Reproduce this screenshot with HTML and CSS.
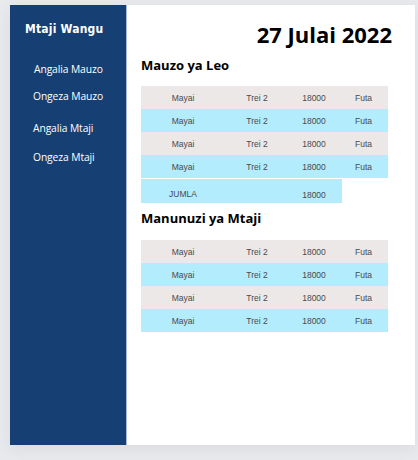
FILE: index.html
```html
<!DOCTYPE html>
<html>
<head>
<meta charset="utf-8">
<link rel="stylesheet" href="styles.css">
</head>
<body>
<div class="app">
  <aside class="sidebar">
    <div class="brand">Mtaji Wangu</div>
    <nav class="nav">
      <a class="nav-link l1">Angalia Mauzo</a>
      <a class="nav-link l2">Ongeza Mauzo</a>
      <a class="nav-link l3">Angalia Mtaji</a>
      <a class="nav-link l4">Ongeza Mtaji</a>
    </nav>
  </aside>
  <main class="main">
    <div class="date">27 Julai 2022</div>
    <h2 class="heading">Mauzo ya Leo</h2>
    <div class="table">
      <div class="row grey"><span>Mayai</span><span>Trei 2</span><span>18000</span><span>Futa</span></div>
      <div class="row cyan"><span>Mayai</span><span>Trei 2</span><span>18000</span><span>Futa</span></div>
      <div class="row grey"><span>Mayai</span><span>Trei 2</span><span>18000</span><span>Futa</span></div>
      <div class="row cyan"><span>Mayai</span><span>Trei 2</span><span>18000</span><span>Futa</span></div>
      <div class="row cyan total"><span class="jumla">JUMLA</span><span></span><span class="sum">18000</span></div>
    </div>
    <h2 class="heading h2b">Manunuzi ya Mtaji</h2>
    <div class="table t2">
      <div class="row grey"><span>Mayai</span><span>Trei 2</span><span>18000</span><span>Futa</span></div>
      <div class="row cyan"><span>Mayai</span><span>Trei 2</span><span>18000</span><span>Futa</span></div>
      <div class="row grey"><span>Mayai</span><span>Trei 2</span><span>18000</span><span>Futa</span></div>
      <div class="row cyan"><span>Mayai</span><span>Trei 2</span><span>18000</span><span>Futa</span></div>
    </div>
  </main>
</div>
</body>
</html>
```

FILE: styles.css
```css
html, body {
  margin: 0;
  padding: 0;
}
body {
  background: #e8e9ec;
  width: 418px;
  height: 460px;
  overflow: hidden;
}
.app {
  margin: 5px 0 0 10px;
  width: 405px;
  height: 440px;
  display: flex;
  box-shadow: 0 4px 14px rgba(0, 0, 0, 0.06);
}
.sidebar {
  width: 116px;
  background: #163f73;
  border-right: 1px solid #a9bcd6;
  color: #fff;
  font-family: "Open Sans", sans-serif;
}
.brand {
  font-family: "DejaVu Sans Condensed", "DejaVu Sans", sans-serif;
  font-weight: bold;
  font-size: 12px;
  margin: 16px 0 0 15px;
  line-height: 16px;
  letter-spacing: 0.2px;
}
.nav {
  display: flex;
  flex-direction: column;
  padding-left: 23px;
  margin-top: 25px;
}
.nav-link {
  font-size: 10.3px;
  line-height: 14px;
  color: #fff;
  letter-spacing: -0.1px;
}
.l1 { padding-left: 1px; }
.l2 { margin-top: 13px; }
.l3 { margin-top: 18px; }
.l4 { margin-top: 15px; }
.main {
  flex: 1;
  background: #fff;
  padding: 0 0 0 14px;
  font-family: "Open Sans", sans-serif;
}
.date {
  text-align: right;
  font-weight: bold;
  font-size: 22px;
  line-height: 26px;
  margin: 16px 23px 0 0;
}
.heading {
  margin: 9px 0 0 0;
  font-size: 13px;
  line-height: 18px;
  font-weight: bold;
  color: #000;
}
.h2b {
  margin-top: 6px;
}
.table {
  margin-top: 12px;
  width: 247px;
  font-family: "Liberation Sans", Arial, sans-serif;
  font-size: 8.5px;
  color: #4a4a4a;
}
.t2 {
  margin-top: 13px;
}
.row {
  display: grid;
  grid-template-columns: 84px 64px 50px 49px;
  height: 23px;
  align-items: center;
  text-align: center;
}
.grey { background: #ece8e7; }
.cyan { background: #b3ecfc; }
.total {
  width: 201px;
  margin-top: 1px;
  grid-template-columns: 84px 64px 50px;
  align-items: end;
  padding-bottom: 3px;
  box-sizing: border-box;
  height: 24px;
}
.jumla { padding-bottom: 1px; }
```
